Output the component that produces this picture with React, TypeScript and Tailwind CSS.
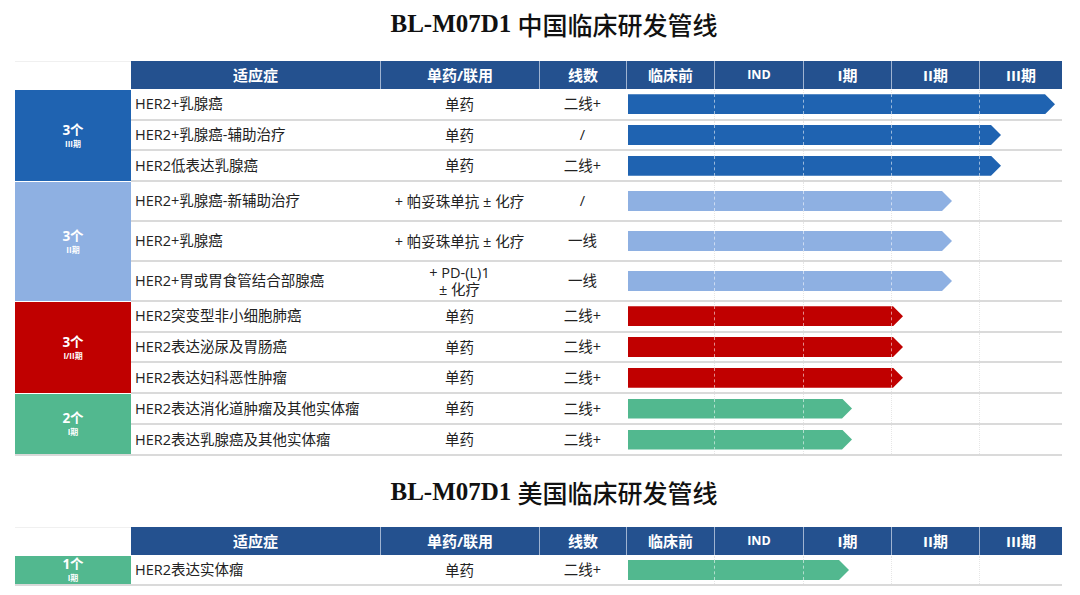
import React from 'react';

type Row = { name: string; combo: string | string[]; line: string; end: number };
type Group = { count: string; phase: string; cell: string; h: string; rows: Row[] };

const CN = "font-['Open_Sans','Noto_Sans_CJK_SC',sans-serif]";

const china: Group[] = [
  {
    count: '3个', phase: 'III期', cell: 'bg-[#1f63b1]', h: 'h-[92px]',
    rows: [
      { name: 'HER2+乳腺癌', combo: '单药', line: '二线+', end: 1055 },
      { name: 'HER2+乳腺癌-辅助治疗', combo: '单药', line: '/', end: 1001 },
      { name: 'HER2低表达乳腺癌', combo: '单药', line: '二线+', end: 1001 },
    ],
  },
  {
    count: '3个', phase: 'II期', cell: 'bg-[#8eb0e2]', h: 'h-[120px]',
    rows: [
      { name: 'HER2+乳腺癌-新辅助治疗', combo: '+ 帕妥珠单抗 ± 化疗', line: '/', end: 952 },
      { name: 'HER2+乳腺癌', combo: '+ 帕妥珠单抗 ± 化疗', line: '一线', end: 952 },
      { name: 'HER2+胃或胃食管结合部腺癌', combo: ['+ PD-(L)1', '± 化疗'], line: '一线', end: 952 },
    ],
  },
  {
    count: '3个', phase: 'I/II期', cell: 'bg-[#c00000]', h: 'h-[92px]',
    rows: [
      { name: 'HER2突变型非小细胞肺癌', combo: '单药', line: '二线+', end: 903 },
      { name: 'HER2表达泌尿及胃肠癌', combo: '单药', line: '二线+', end: 903 },
      { name: 'HER2表达妇科恶性肿瘤', combo: '单药', line: '二线+', end: 903 },
    ],
  },
  {
    count: '2个', phase: 'I期', cell: 'bg-[#52b88f]', h: 'h-[62px]',
    rows: [
      { name: 'HER2表达消化道肿瘤及其他实体瘤', combo: '单药', line: '二线+', end: 852 },
      { name: 'HER2表达乳腺癌及其他实体瘤', combo: '单药', line: '二线+', end: 852 },
    ],
  },
];

const usa: Group[] = [
  {
    count: '1个', phase: 'I期', cell: 'bg-[#52b88f]', h: 'h-[30px]',
    rows: [{ name: 'HER2表达实体瘤', combo: '单药', line: '二线+', end: 849 }],
  },
];

const heads = ['适应症', '单药/联用', '线数', '临床前', 'IND', 'I期', 'II期', 'III期'];
const gridLeft = ['left-[88px]', 'left-[177px]', 'left-[265px]', 'left-[353px]'];
const barLeft = [
  { x: 86, c: 'left-[86px]' },
  { x: 175, c: 'left-[175px]' },
  { x: 263, c: 'left-[263px]' },
  { x: 351, c: 'left-[351px]' },
];

function Title({ text }: { text: string }) {
  return (
    <div className="flex justify-center pl-[28px] text-[25px] leading-[30px] text-[#111]">
      <span className="font-['Liberation_Serif',serif] font-bold">BL-M07D1&nbsp;</span>
      <span className="font-['Noto_Sans_CJK_SC',sans-serif] font-medium">{text}</span>
    </div>
  );
}

function Header() {
  return (
    <div className="grid h-[28px] grid-cols-[116px_249px_159px_87px_88px_89px_88px_88px_83px]">
      <div className="border-t border-[#f0f0f0]" />
      {heads.map((h, i) => (
        <div
          key={h}
          className={`flex items-center justify-center bg-[#24518f] font-bold text-white ${
            i > 0 ? 'border-l border-[#9fb3d1]' : ''
          } ${h === 'IND' ? 'text-[12.5px]' : 'text-[15px]'}`}
        >
          {h}
        </div>
      ))}
    </div>
  );
}

function Bar({ end, bg }: { end: number; bg: string }) {
  const w = end - 628;
  return (
    <div
      className={`absolute left-[2px] top-1/2 h-[20px] -translate-y-1/2 ${bg} [clip-path:polygon(0_0,calc(100%_-_10px)_0,100%_50%,calc(100%_-_10px)_100%,0_100%)]`}
      style={{ width: w }}
    >
      {barLeft
        .filter((b) => b.x < w - 9)
        .map((b) => (
          <div key={b.x} className={`absolute top-0 bottom-0 ${b.c} border-l border-dashed border-white/55`} />
        ))}
    </div>
  );
}

function Table({ groups }: { groups: Group[] }) {
  return (
    <div className={`w-[1047px] ${CN}`}>
      <Header />
      <div className="mt-px">
        {groups.map((g, gi) => {
          const last = gi === groups.length - 1;
          return (
            <div key={gi} className={`flex ${g.h}`}>
              <div
                className={`flex w-[116px] shrink-0 flex-col items-center justify-center text-white ${g.cell} ${
                  last ? 'border-b-2 border-[#d9d9d9]' : 'border-b border-white'
                }`}
              >
                <div className="text-[13.5px] font-bold leading-[15px]">{g.count}</div>
                <div className="text-[8px] font-bold leading-[11px]">{g.phase}</div>
              </div>
              <div className="flex flex-1 flex-col">
                {g.rows.map((r, ri) => (
                  <div
                    key={ri}
                    className="grid flex-1 grid-cols-[249px_159px_87px_436px] border-b-2 border-[#dadada] text-[14.5px] text-[#222]"
                  >
                    <div className="flex items-center pl-[4px]">{r.name}</div>
                    <div className="flex flex-col items-center justify-center leading-[17px]">
                      {Array.isArray(r.combo) ? r.combo.map((c) => <div key={c}>{c}</div>) : r.combo}
                    </div>
                    <div className="flex items-center justify-center">{r.line}</div>
                    <div className="relative">
                      {gridLeft.map((c) => (
                        <div key={c} className={`absolute top-0 bottom-0 ${c} border-l border-dotted border-[#e6e6e6]`} />
                      ))}
                      <Bar end={r.end} bg={g.cell} />
                    </div>
                  </div>
                ))}
              </div>
            </div>
          );
        })}
      </div>
    </div>
  );
}

export default function App() {
  return (
    <div className="h-[595px] w-[1080px] overflow-hidden bg-white">
      <div className="h-[61px] pt-[9px]">
        <Title text="中国临床研发管线" />
      </div>
      <div className="pl-[15px]">
        <Table groups={china} />
      </div>
      <div className="h-[71px] pt-[21px]">
        <Title text="美国临床研发管线" />
      </div>
      <div className="pl-[15px]">
        <Table groups={usa} />
      </div>
    </div>
  );
}
